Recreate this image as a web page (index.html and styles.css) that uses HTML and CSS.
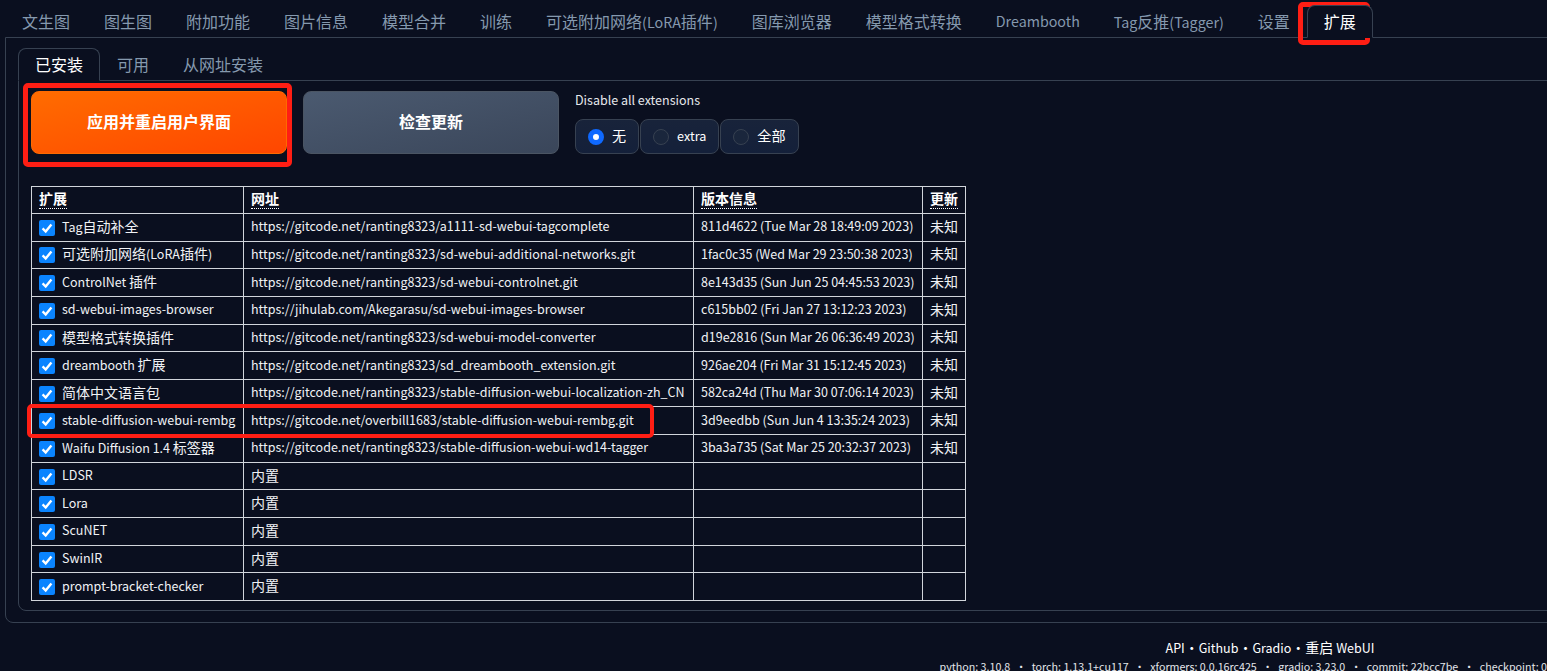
FILE: index.html
```html
<!DOCTYPE html>
<html lang="zh-CN">
<head>
<meta charset="utf-8">
<title>Extensions</title>
<link rel="stylesheet" href="styles.css">
</head>
<body>
<div class="page">
  <nav class="tabs main-tabs">
    <button class="tab"><span class="zh">文生图</span></button>
    <button class="tab"><span class="zh">图生图</span></button>
    <button class="tab"><span class="zh">附加功能</span></button>
    <button class="tab"><span class="zh">图片信息</span></button>
    <button class="tab"><span class="zh">模型合并</span></button>
    <button class="tab"><span class="zh">训练</span></button>
    <button class="tab"><span class="zh">可选附加网络</span>(LoRA<span class="zh">插件</span>)</button>
    <button class="tab"><span class="zh">图库浏览器</span></button>
    <button class="tab"><span class="zh">模型格式转换</span></button>
    <button class="tab">Dreambooth</button>
    <button class="tab">Tag<span class="zh">反推</span>(Tagger)</button>
    <button class="tab"><span class="zh">设置</span></button>
    <button class="tab active"><span class="zh">扩展</span></button>
  </nav>
  <section class="panel outer">
    <nav class="tabs">
      <button class="tab active"><span class="zh">已安装</span></button>
      <button class="tab"><span class="zh">可用</span></button>
      <button class="tab"><span class="zh">从网址安装</span></button>
    </nav>
    <div class="panel inner">
      <div class="actions">
        <button class="btn primary">应用并重启用户界面</button>
        <button class="btn secondary">检查更新</button>
        <div class="disable">
          <div class="disable-label">Disable all extensions</div>
          <div class="radios">
            <label class="radio"><span class="dot on"></span><span class="zh">无</span></label>
            <label class="radio"><span class="dot"></span>extra</label>
            <label class="radio"><span class="dot"></span><span class="zh">全部</span></label>
          </div>
        </div>
      </div>
      <table class="ext">
        <colgroup><col class="c1"><col class="c2"><col class="c3"><col class="c4"></colgroup>
        <thead>
          <tr><th><abbr class="zh">扩展</abbr></th><th><abbr class="zh">网址</abbr></th><th><abbr class="zh">版本信息</abbr></th><th><abbr class="zh">更新</abbr></th></tr>
        </thead>
        <tbody>
          <tr><td><label class="name"><svg class="check" viewBox="0 0 16 16"><path d="M3.6 8.4 6.7 11.5 12.4 4.6"/></svg><span>Tag<span class="zh">自动补全</span></span></label></td><td>https://gitcode.net/ranting8323/a1111-sd-webui-tagcomplete</td><td>811d4622 (Tue Mar 28 18:49:09 2023)</td><td><span class="zh">未知</span></td></tr>
          <tr><td><label class="name"><svg class="check" viewBox="0 0 16 16"><path d="M3.6 8.4 6.7 11.5 12.4 4.6"/></svg><span><span class="zh">可选附加网络</span>(LoRA<span class="zh">插件</span>)</span></label></td><td>https://gitcode.net/ranting8323/sd-webui-additional-networks.git</td><td>1fac0c35 (Wed Mar 29 23:50:38 2023)</td><td><span class="zh">未知</span></td></tr>
          <tr><td><label class="name"><svg class="check" viewBox="0 0 16 16"><path d="M3.6 8.4 6.7 11.5 12.4 4.6"/></svg><span>ControlNet <span class="zh">插件</span></span></label></td><td>https://gitcode.net/ranting8323/sd-webui-controlnet.git</td><td>8e143d35 (Sun Jun 25 04:45:53 2023)</td><td><span class="zh">未知</span></td></tr>
          <tr><td><label class="name"><svg class="check" viewBox="0 0 16 16"><path d="M3.6 8.4 6.7 11.5 12.4 4.6"/></svg><span>sd-webui-images-browser</span></label></td><td>https://jihulab.com/Akegarasu/sd-webui-images-browser</td><td>c615bb02 (Fri Jan 27 13:12:23 2023)</td><td><span class="zh">未知</span></td></tr>
          <tr><td><label class="name"><svg class="check" viewBox="0 0 16 16"><path d="M3.6 8.4 6.7 11.5 12.4 4.6"/></svg><span class="zh">模型格式转换插件</span></label></td><td>https://gitcode.net/ranting8323/sd-webui-model-converter</td><td>d19e2816 (Sun Mar 26 06:36:49 2023)</td><td><span class="zh">未知</span></td></tr>
          <tr><td><label class="name"><svg class="check" viewBox="0 0 16 16"><path d="M3.6 8.4 6.7 11.5 12.4 4.6"/></svg><span>dreambooth <span class="zh">扩展</span></span></label></td><td>https://gitcode.net/ranting8323/sd_dreambooth_extension.git</td><td>926ae204 (Fri Mar 31 15:12:45 2023)</td><td><span class="zh">未知</span></td></tr>
          <tr><td><label class="name"><svg class="check" viewBox="0 0 16 16"><path d="M3.6 8.4 6.7 11.5 12.4 4.6"/></svg><span class="zh">简体中文语言包</span></label></td><td>https://gitcode.net/ranting8323/stable-diffusion-webui-localization-zh_CN</td><td>582ca24d (Thu Mar 30 07:06:14 2023)</td><td><span class="zh">未知</span></td></tr>
          <tr><td><label class="name"><svg class="check" viewBox="0 0 16 16"><path d="M3.6 8.4 6.7 11.5 12.4 4.6"/></svg><span>stable-diffusion-webui-rembg</span></label></td><td>https://gitcode.net/overbill1683/stable-diffusion-webui-rembg.git</td><td>3d9eedbb (Sun Jun 4 13:35:24 2023)</td><td><span class="zh">未知</span></td></tr>
          <tr><td><label class="name"><svg class="check" viewBox="0 0 16 16"><path d="M3.6 8.4 6.7 11.5 12.4 4.6"/></svg><span>Waifu Diffusion 1.4 <span class="zh">标签器</span></span></label></td><td>https://gitcode.net/ranting8323/stable-diffusion-webui-wd14-tagger</td><td>3ba3a735 (Sat Mar 25 20:32:37 2023)</td><td><span class="zh">未知</span></td></tr>
          <tr><td><label class="name"><svg class="check" viewBox="0 0 16 16"><path d="M3.6 8.4 6.7 11.5 12.4 4.6"/></svg><span>LDSR</span></label></td><td><span class="zh">内置</span></td><td></td><td></td></tr>
          <tr><td><label class="name"><svg class="check" viewBox="0 0 16 16"><path d="M3.6 8.4 6.7 11.5 12.4 4.6"/></svg><span>Lora</span></label></td><td><span class="zh">内置</span></td><td></td><td></td></tr>
          <tr><td><label class="name"><svg class="check" viewBox="0 0 16 16"><path d="M3.6 8.4 6.7 11.5 12.4 4.6"/></svg><span>ScuNET</span></label></td><td><span class="zh">内置</span></td><td></td><td></td></tr>
          <tr><td><label class="name"><svg class="check" viewBox="0 0 16 16"><path d="M3.6 8.4 6.7 11.5 12.4 4.6"/></svg><span>SwinIR</span></label></td><td><span class="zh">内置</span></td><td></td><td></td></tr>
          <tr><td><label class="name"><svg class="check" viewBox="0 0 16 16"><path d="M3.6 8.4 6.7 11.5 12.4 4.6"/></svg><span>prompt-bracket-checker</span></label></td><td><span class="zh">内置</span></td><td></td><td></td></tr>
        </tbody>
      </table>
    </div>
  </section>
  <footer class="footer">
    <div class="links">API<span class="zh">・</span>Github<span class="zh">・</span>Gradio<span class="zh">・重启</span> WebUI</div>
    <div class="stats">python: 3.10.8<span class="sep">•</span>torch: 1.13.1+cu117<span class="sep">•</span>xformers: 0.0.16rc425<span class="sep">•</span>gradio: 3.23.0<span class="sep">•</span>commit: 22bcc7be<span class="sep">•</span>checkpoint: 0000000000</div>
  </footer>
  <div class="mark mark-tab"></div>
  <div class="mark mark-apply"></div>
  <div class="mark mark-row"></div>
</div>
</body>
</html>
```
FILE: styles.css
```css
* { box-sizing: border-box; }
html, body {
  margin: 0;
  height: 671px;
  overflow: hidden;
  background: #0a0f1f;
}
body {
  color: #e5e7eb;
  font-family: "Noto Sans CJK SC", "Noto Sans", sans-serif;
}
.zh {
  font-size: 1.12em;
}
.page {
  position: relative;
  width: 2540px;
  padding: 5px 5px 0;
}
.tabs {
  display: flex;
}
.tab {
  height: 33px;
  margin-bottom: -1px;
  padding: 0 16px;
  border: 1px solid transparent;
  border-radius: 8px 8px 0 0;
  background: transparent;
  color: #8599ae;
  font: 14.29px/1 "Noto Sans CJK SC", "Noto Sans", sans-serif;
}
.tab.active {
  position: relative;
  z-index: 1;
  border-color: #374151;
  border-bottom-color: #0a0f1f;
  background: #0a0f1f;
  color: #fff;
}
.panel {
  border: 1px solid #374151;
}
.outer {
  height: 586px;
  padding: 10px 12px;
  border-radius: 0 0 8px 8px;
}
.inner {
  padding: 10px 12px;
  height: 531px;
  border-radius: 0 0 8px 8px;
}
.actions {
  display: flex;
  gap: 16px;
  height: 63px;
}
.btn {
  width: 256px;
  height: 63px;
  padding-bottom: 4px;
  border: 1px solid #4b5563;
  border-radius: 8px;
  color: #fff;
  font: 700 16px/1 "Noto Sans CJK SC", "Noto Sans", sans-serif;
}
.primary {
  border-color: #ff6a00;
  background: linear-gradient(to bottom right, #ff6c00, #ff4600);
}
.secondary {
  background: linear-gradient(to bottom right, #4b5a70, #3a465a);
}
.disable-label {
  height: 19px;
  margin-bottom: 9px;
  font-size: 12.5px;
  line-height: 17px;
}
.radios {
  display: flex;
  gap: 1px;
}
.radio {
  display: flex;
  align-items: center;
  gap: 8px;
  height: 35px;
  padding: 0 12px 2px;
  border: 1px solid #374151;
  border-radius: 8px;
  background: linear-gradient(#18233a, #14203a);
  color: #fff;
  font-size: 12.6px;
}
.radio .zh {
  margin-bottom: 2px;
}
.dot {
  width: 16px;
  height: 16px;
  margin-top: 2px;
  border: 1px solid #374151;
  border-radius: 50%;
  background: #1a263c;
}
.dot.on {
  border: 5px solid #0f69ff;
  background: #fff;
}
.ext {
  width: 934px;
  margin-top: 32px;
  border-collapse: collapse;
  table-layout: fixed;
  font-size: 12.5px;
}
.c1 { width: 212px; }
.c2 { width: 450px; }
.c3 { width: 229px; }
.c4 { width: 43px; }
.ext th, .ext td {
  height: 27.65px;
  padding: 0 7px 2px;
  border: 1px solid #d1d5db;
  line-height: 18px;
  text-align: left;
  white-space: nowrap;
  color: #f0f2f5;
}
.ext th {
  height: 27px;
  padding-bottom: 3px;
  font-weight: 700;
  color: #fff;
}
abbr {
  border-bottom: 1px dotted #fff;
}
.name {
  display: flex;
  align-items: center;
  gap: 7px;
}
.check {
  flex: none;
  width: 16px;
  height: 16px;
  margin-top: 3px;
  border-radius: 2px;
  background: #0a84ff;
}
.check path {
  fill: none;
  stroke: #fff;
  stroke-width: 2.4;
}
.footer {
  margin-top: 14px;
  text-align: center;
  color: #e5e7eb;
}
.links {
  height: 20px;
  font-size: 12.5px;
  line-height: 20px;
  color: #fff;
}
.stats {
  margin-top: 2px;
  font-size: 10.7px;
  line-height: 16px;
  white-space: nowrap;
}
.sep {
  margin: 0 5.4px;
}
.mark {
  position: absolute;
  border: 5px solid #ff1e14;
  border-radius: 5px;
}
.mark-tab { left: 1298px; top: 2px; width: 72px; height: 43px; }
.mark-apply { left: 23px; top: 83px; width: 269px; height: 84px; }
.mark-row { left: 27px; top: 404px; width: 627px; height: 34px; border-width: 4px; }
```
